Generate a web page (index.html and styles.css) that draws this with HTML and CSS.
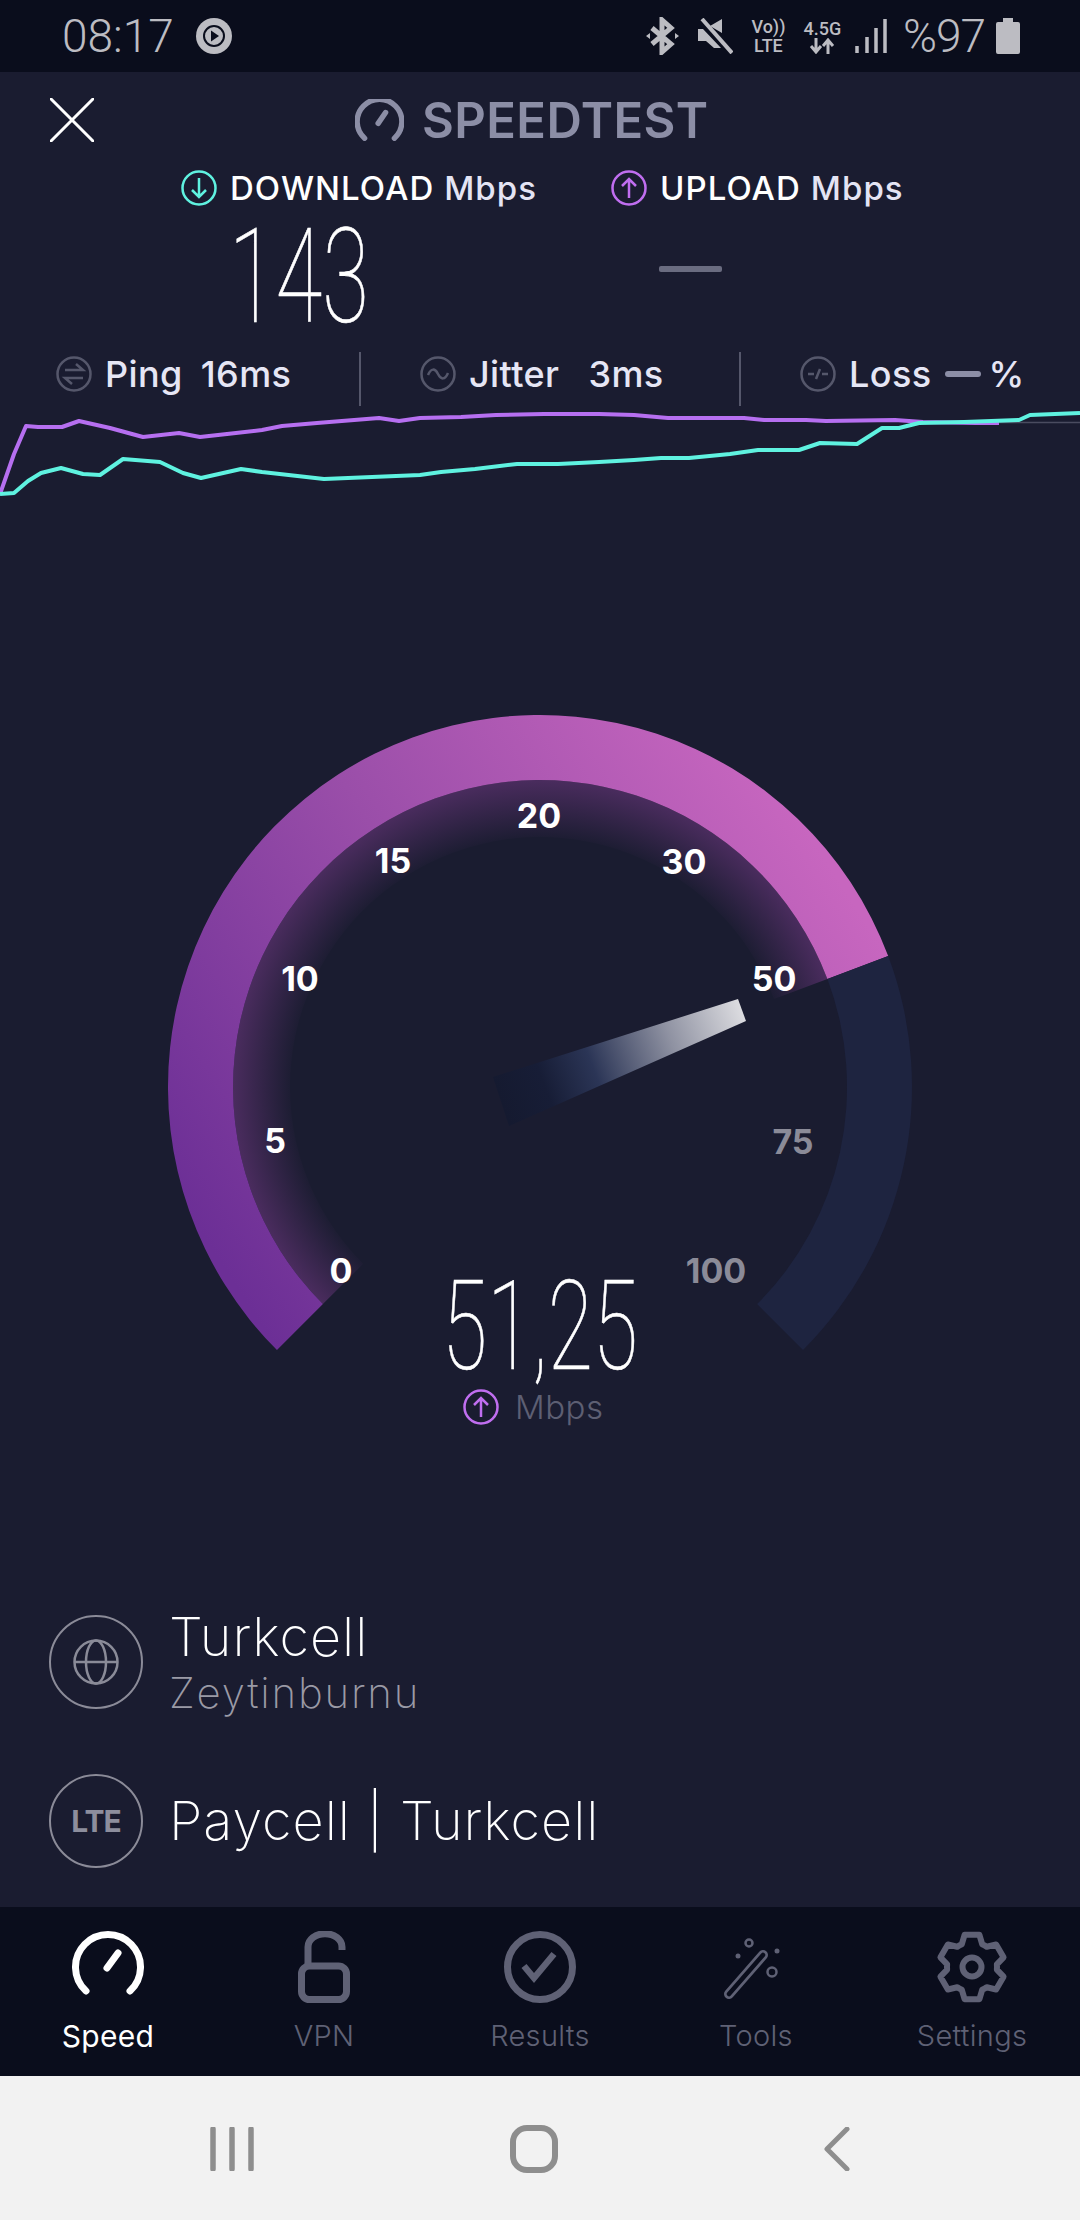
FILE: index.html
```html
<!DOCTYPE html>
<html lang="en">
<head>
  <meta charset="UTF-8">
  <meta name="viewport" content="width=device-width, initial-scale=1.0">
  <title>Speedtest</title>
  <link rel="stylesheet" href="styles.css">
</head>
<body>
  <div class="phone">
    <div class="status-bar">
      <div class="status-left">
        <span class="clock">08:17</span>
        <svg class="play-icon" width="36" height="36" viewBox="0 0 36 36"><circle cx="18" cy="18" r="18" fill="#bcbcc2"/><circle cx="18" cy="18" r="10" fill="none" stroke="#0a0d1c" stroke-width="2"/><path d="M15 12.5 23 18l-8 5.5z" fill="#0a0d1c"/></svg>
      </div>
      <div class="status-right">
        <svg width="33" height="38" viewBox="0 0 33 38"><path d="M6 11 25 27 16 35V3l9 8L6 27" fill="none" stroke="#bcbcc2" stroke-width="5"/><path d="M0 19l4-3v6zM33 19l-4-3v6z" fill="#bcbcc2"/></svg>
        <svg class="mute-icon" width="35" height="36" viewBox="0 0 35 36"><path d="M0 11h5L23 30H16l-8-7H0zM12 8l12-7v14z" fill="#bcbcc2"/><path d="M4 1 34 35" stroke="#bcbcc2" stroke-width="4"/></svg>
        <div class="net-stack volte"><span>Vo))</span><span>LTE</span></div>
        <div class="net-stack fourg"><span>4.5G</span>
          <svg width="26" height="16" viewBox="0 0 26 16"><path d="M7 0v13M2 8l5 6 5-6M19 16V3M14 8l5-6 5 6" fill="none" stroke="#bcbcc2" stroke-width="3"/></svg>
        </div>
        <svg class="signal-icon" width="32" height="34" viewBox="0 0 32 34"><path d="M2 27v7M12 18v16M21 9v25M30 0v34" stroke="#bcbcc2" stroke-width="3.5"/></svg>
        <span class="battery-pct">%97</span>
        <svg class="battery-icon" width="24" height="36" viewBox="0 0 24 36"><path d="M7 0h10v4h5a2 2 0 0 1 2 2v28a2 2 0 0 1-2 2H2a2 2 0 0 1-2-2V6a2 2 0 0 1 2-2h5z" fill="#bcbcc2"/></svg>
      </div>
    </div>

    <main class="content">
      <header class="title-row">
        <svg class="close-icon" width="44" height="44" viewBox="0 0 44 44"><path d="M1 1 43 43M43 1 1 43" stroke="#fff" stroke-width="3" stroke-linecap="round"/></svg>
        <svg class="title-gauge" width="49" height="42" viewBox="0 0 72 62"><path d="M14 58A33 33 0 1 1 58 58" fill="none" stroke="#8c8ea6" stroke-width="8" stroke-linecap="round"/><path d="M34 36 45 20" stroke="#8c8ea6" stroke-width="8" stroke-linecap="round"/></svg>
        <h1>SPEEDTEST</h1>
      </header>

      <section class="readings">
        <div class="reading">
          <div class="reading-label">
            <svg width="36" height="36" viewBox="0 0 36 36"><circle cx="18" cy="18" r="16.5" fill="none" stroke="#5ff2e0" stroke-width="2.5"/><path d="M18 8v19M11 20l7 7 7-7" fill="none" stroke="#5ff2e0" stroke-width="2.5"/></svg>
            <span>DOWNLOAD <em>Mbps</em></span>
          </div>
          <div class="reading-value big-number">143</div>
        </div>
        <div class="reading">
          <div class="reading-label">
            <svg width="36" height="36" viewBox="0 0 36 36"><circle cx="18" cy="18" r="16.5" fill="none" stroke="#c06ef0" stroke-width="2.5"/><path d="M18 28V9M11 16l7-7 7 7" fill="none" stroke="#c06ef0" stroke-width="2.5"/></svg>
            <span>UPLOAD <em>Mbps</em></span>
          </div>
          <div class="reading-empty"><i class="dash"></i></div>
        </div>
      </section>

      <section class="stats">
        <div class="stat stat-ping">
          <svg width="36" height="36" viewBox="0 0 36 36"><circle cx="18" cy="18" r="16.5" fill="none" stroke="#55576b" stroke-width="2.5"/><path d="M9 14h18l-7-6M27 22H9l7 6" fill="none" stroke="#55576b" stroke-width="2.5"/></svg>
          <span class="stat-name">Ping</span><span class="stat-val">16ms</span>
        </div>
        <i class="stat-rule"></i>
        <div class="stat stat-jitter">
          <svg width="36" height="36" viewBox="0 0 36 36"><circle cx="18" cy="18" r="16.5" fill="none" stroke="#55576b" stroke-width="2.5"/><path d="M8 19c3-7 7-7 10-1s7 6 10-1" fill="none" stroke="#55576b" stroke-width="2.5"/></svg>
          <span class="stat-name">Jitter</span><span class="stat-val">3ms</span>
        </div>
        <i class="stat-rule"></i>
        <div class="stat stat-loss">
          <svg width="36" height="36" viewBox="0 0 36 36"><circle cx="18" cy="18" r="16.5" fill="none" stroke="#55576b" stroke-width="2.5"/><path d="M8 18h6M16 23l4-10M22 18h6" fill="none" stroke="#55576b" stroke-width="2.5"/></svg>
          <span class="stat-name">Loss</span><i class="dash dash-small"></i><span class="stat-pct">%</span>
        </div>
      </section>

      <svg class="graph" width="1080" height="96" viewBox="0 405 1080 96">
        <path d="M923 421.5H1080" stroke="#4a4c60" stroke-width="1.5"/>
        <path d="M0 493 14 453 26 425 38 426H62L79 420 110 427 143 436 179 432 200 436 227 433 262 429 282 425 317 422 379 417 399 420 420 417 461 416 496 414 544 413H599L634 414 668 417 744 417 764 419H806L826 420 895 419 923 421 975 422H999" fill="none" stroke="#b66ff0" stroke-width="4" stroke-linejoin="round"/>
        <path d="M0 493 14 492 28 480 41 472 61 467 83 473 100 474 123 458 160 461 183 472 201 477 241 468 262 471 324 478 372 476 420 474 441 471 475 468 517 463 558 463 599 461 634 459 661 457 689 457 730 453 758 449 799 449 820 442 857 443 882 427 899 427 919 422 964 421 1019 419 1030 414 1080 412" fill="none" stroke="#5ff2e0" stroke-width="4" stroke-linejoin="round"/>
      </svg>

      <section class="gauge">
        <svg class="gauge-dial" width="1080" height="664" viewBox="0 700 1080 664">
          <defs>
            <linearGradient id="arcFill" gradientUnits="userSpaceOnUse" x1="277" y1="1349" x2="888" y2="955">
              <stop offset="0" stop-color="#6c2f96"/>
              <stop offset="0.5" stop-color="#9a4ea9"/>
              <stop offset="1" stop-color="#c766bf"/>
            </linearGradient>
            <radialGradient id="arcGlow" gradientUnits="userSpaceOnUse" cx="540" cy="1086" r="307">
              <stop offset="0.8" stop-color="#1a1c30"/>
              <stop offset="1" stop-color="#4a2c5e"/>
            </radialGradient>
            <linearGradient id="needleFill" gradientUnits="userSpaceOnUse" x1="501" y1="1100" x2="742" y2="1009">
              <stop offset="0" stop-color="#151a30"/>
              <stop offset="0.18" stop-color="#171d36"/>
              <stop offset="0.38" stop-color="#2b3556"/>
              <stop offset="0.7" stop-color="#8f92a2"/>
              <stop offset="1" stop-color="#dcdce0"/>
            </linearGradient>
          </defs>
          <path d="M322.92 1303.08A307 307 0 1 1 827.4 978L774 998A250 250 0 1 0 363.2 1262.8Z" fill="url(#arcGlow)"/>
          <path d="M276.96 1349.04A372 372 0 1 1 888.2 955.1L827.4 978A307 307 0 1 0 322.92 1303.08Z" fill="url(#arcFill)"/>
          <path d="M888.2 955.1A372 372 0 0 1 803.04 1349.04L757.08 1303.08A307 307 0 0 0 827.4 978Z" fill="#1e2440"/>
          <path d="M738 998 746 1020 509 1125 493 1076Z" fill="url(#needleFill)"/>
          <g class="tick">
            <text x="341" y="1282">0</text>
            <text x="275" y="1152">5</text>
            <text x="300" y="990">10</text>
            <text x="393" y="872">15</text>
            <text x="539" y="827">20</text>
            <text x="684" y="873">30</text>
            <text x="774" y="990">50</text>
          </g>
          <g class="tick tick-off">
            <text x="793" y="1153">75</text>
            <text x="716" y="1282">100</text>
          </g>
        </svg>
        <div class="gauge-readout">
          <div class="gauge-value big-number">51,25</div>
          <div class="gauge-unit">
            <svg width="36" height="36" viewBox="0 0 36 36"><circle cx="18" cy="18" r="16.5" fill="none" stroke="#c06ef0" stroke-width="2.5"/><path d="M18 28V9M11 16l7-7 7 7" fill="none" stroke="#c06ef0" stroke-width="2.5"/></svg>
            <span>Mbps</span>
          </div>
        </div>
      </section>

      <section class="servers">
        <div class="server">
          <div class="server-badge">
            <svg width="46" height="46" viewBox="0 0 46 46"><g fill="none" stroke="#8a8b98" stroke-width="2.5"><circle cx="23" cy="23" r="21.5"/><ellipse cx="23" cy="23" rx="10" ry="21.5"/><path d="M2 23H44"/></g></svg>
          </div>
          <div class="server-text">
            <div class="server-name">Turkcell</div>
            <div class="server-place">Zeytinburnu</div>
          </div>
        </div>
        <div class="server">
          <div class="server-badge"><span class="lte">LTE</span></div>
          <div class="server-text">
            <div class="server-name">Paycell | Turkcell</div>
          </div>
        </div>
      </section>
    </main>

    <nav class="tab-bar">
      <div class="tab tab-active">
        <svg width="72" height="72" viewBox="0 0 72 72"><path d="M14 60A32.5 32.5 0 1 1 58 60" fill="none" stroke="#fff" stroke-width="7" stroke-linecap="round"/><path d="M35 37 46 22" stroke="#fff" stroke-width="7" stroke-linecap="round"/></svg>
        <span>Speed</span>
      </div>
      <div class="tab">
        <svg width="72" height="72" viewBox="0 0 72 72"><rect x="13.5" y="35" width="45" height="33.5" rx="8" fill="none" stroke="#5f6175" stroke-width="7"/><path d="M20 35V16A16 12.5 0 0 1 54 16V19" fill="none" stroke="#5f6175" stroke-width="7"/></svg>
        <span>VPN</span>
      </div>
      <div class="tab">
        <svg width="72" height="72" viewBox="0 0 72 72"><circle cx="36" cy="36" r="32.5" fill="none" stroke="#5f6175" stroke-width="7"/><path d="M20 35 30 47 50 23" fill="none" stroke="#5f6175" stroke-width="6.5"/></svg>
        <span>Results</span>
      </div>
      <div class="tab">
        <svg width="72" height="72" viewBox="0 0 72 72"><path d="M9 63 43 24" stroke="#5f6175" stroke-width="10" stroke-linecap="round"/><path d="M9 63 43 24" stroke="#0a0d1c" stroke-width="4.5" stroke-linecap="round"/><g fill="none" stroke="#5f6175" stroke-width="2.5"><circle cx="29" cy="12" r="3.5"/><circle cx="52" cy="41" r="4.5"/></g><circle cx="18" cy="25" r="2.5" fill="#5f6175"/><circle cx="57" cy="20" r="2.5" fill="#5f6175"/></svg>
        <span>Tools</span>
      </div>
      <div class="tab">
        <svg width="72" height="72" viewBox="0 0 72 72"><path d="M25.83 13.16L28.58 3.85H43.42L46.17 13.16A25 25 0 0 1 50.70 15.77L60.13 13.5L67.56 26.35L60.86 33.39A25 25 0 0 1 60.86 38.61L67.56 45.65L60.13 58.5L50.70 56.23A25 25 0 0 1 46.17 58.84L43.42 68.15H28.58L25.83 58.84A25 25 0 0 1 21.30 56.23L11.87 58.5L4.44 45.65L11.14 38.61A25 25 0 0 1 11.14 33.39L4.44 26.35L11.87 13.5L21.30 15.77A25 25 0 0 1 25.83 13.16Z" fill="none" stroke="#5f6175" stroke-width="6" stroke-linejoin="round"/><circle cx="36" cy="36" r="9.5" fill="none" stroke="#5f6175" stroke-width="6"/></svg>
        <span>Settings</span>
      </div>
    </nav>

    <div class="nav-bar">
      <svg width="44" height="44" viewBox="0 0 44 44"><path d="M3 2V42M22 2V42M41 2V42" stroke="#8e8e8e" stroke-width="5.5" stroke-linecap="round"/></svg>
      <svg width="48" height="48" viewBox="0 0 48 48"><rect x="3" y="3" width="42" height="42" rx="14" fill="none" stroke="#8e8e8e" stroke-width="6"/></svg>
      <svg width="26" height="44" viewBox="0 0 26 44"><path d="M23 2 3 22 23 42" fill="none" stroke="#8e8e8e" stroke-width="5" stroke-linecap="round" stroke-linejoin="round"/></svg>
    </div>
  </div>
</body>
</html>
```

FILE: styles.css
```css
:root {
  --bg: #1a1c30;
  --bar: #0a0d1c;
  --status: #bcbcc2;
  --muted: #8b8b98;
  --tab-off: #5f6175;
}

* {
  box-sizing: border-box;
}

body {
  margin: 0;
  background-color: var(--bg);
  font-family: 'Inter', 'Liberation Sans', sans-serif;
  color: #fff;
}

svg {
  display: block;
  flex-shrink: 0;
}

.phone {
  width: 1080px;
  height: 2220px;
  display: flex;
  flex-direction: column;
  overflow: hidden;
}

/* status bar */
.status-bar {
  height: 72px;
  background-color: var(--bar);
  color: var(--status);
  font-family: 'Roboto', sans-serif;
  font-weight: 300;
  display: flex;
  align-items: center;
  justify-content: space-between;
  padding: 0 60px 0 62px;
}

.status-left {
  display: flex;
  align-items: center;
  gap: 22px;
}

.clock {
  font-size: 46px;
  line-height: 72px;
}

.status-right {
  display: flex;
  align-items: center;
}

.mute-icon {
  margin-left: 19px;
}

.net-stack {
  display: flex;
  flex-direction: column;
  align-items: center;
  font-family: 'Roboto', sans-serif;
  font-weight: 500;
  line-height: 19px;
}

.volte {
  margin-left: 17px;
  width: 37px;
  font-size: 18px;
}

.fourg {
  margin-left: 16px;
  width: 39px;
  font-size: 18px;
}

.signal-icon {
  margin-left: 13px;
}

.battery-pct {
  margin-left: 16px;
  font-size: 46px;
  letter-spacing: -1px;
}

.battery-icon {
  margin-left: 11px;
}

/* main area */
.content {
  flex: 1;
  background-color: var(--bg);
}

.title-row {
  display: flex;
  align-items: center;
  height: 68px;
  margin-top: 14px;
  padding-left: 50px;
}

.title-gauge {
  margin-left: 261px;
}

.title-row h1 {
  margin: 0 0 0 18px;
  font-size: 49px;
  font-weight: 600;
  color: #8c8ea6;
  letter-spacing: 0.4px;
}

.readings {
  display: flex;
  padding-left: 181px;
  margin-top: 13px;
}

.reading {
  width: 430px;
}

.reading-label {
  display: flex;
  align-items: center;
  gap: 13px;
  height: 42px;
  font-size: 33px;
  font-weight: 500;
  letter-spacing: 1.05px;
  white-space: nowrap;
  color: #fff;
}

.reading-label em {
  font-style: normal;
  color: #e4e4f4;
}

.big-number {
  font-family: 'Roboto', sans-serif;
  font-weight: 100;
  -webkit-text-stroke: 0.6px #fff;
  transform: scaleX(0.65);
  transform-origin: left center;
}

.reading-value {
  margin-left: 48px;
  margin-top: 9px;
  font-size: 131px;
  line-height: 118px;
}

.reading-empty {
  padding: 57px 0 0 48px;
}

.dash {
  display: block;
  width: 63px;
  height: 6px;
  border-radius: 2px;
  background-color: #6a6c80;
}

.stats {
  display: flex;
  align-items: center;
  height: 54px;
  margin-top: 16px;
}

.stat {
  display: flex;
  align-items: center;
  padding-bottom: 10px;
  font-size: 36px;
  font-weight: 500;
  letter-spacing: 0.4px;
  color: #e6e6f5;
}

.stat-ping {
  width: 359px;
  padding-left: 56px;
}

.stat-jitter {
  width: 378px;
  padding-left: 59px;
}

.stat-loss {
  padding-left: 59px;
}

.stat-name {
  margin-left: 13px;
}

.stat-val {
  margin-left: 18px;
}

.stat-jitter .stat-val {
  margin-left: 29px;
}

.stat-rule {
  width: 2px;
  height: 54px;
  background-color: #55576b;
}

.dash-small {
  width: 36px;
  margin-left: 14px;
  border-radius: 3px;
  background-color: #8c8ea6;
}

.stat-pct {
  margin-left: 7px;
}

/* gauge */
.gauge {
  position: relative;
  margin-top: 199px;
  height: 913px;
}

.tick text {
  font-family: 'Inter', sans-serif;
  font-size: 34px;
  font-weight: 700;
  fill: #fff;
  text-anchor: middle;
}

.tick-off text {
  fill: #8b8b98;
}

.gauge-readout {
  position: absolute;
  left: 442px;
  top: 570px;
}

.gauge-value {
  font-size: 124px;
  line-height: 112px;
  white-space: nowrap;
  transform: scaleX(0.665);
}

.gauge-unit {
  display: flex;
  align-items: center;
  gap: 16px;
  margin: 4px 0 0 21px;
  font-size: 33px;
  font-weight: 300;
  letter-spacing: 0.5px;
  color: #5d5f73;
}

/* server rows */
.servers {
  display: flex;
  flex-direction: column;
  gap: 64px;
  padding-left: 49px;
}

.server {
  display: flex;
  align-items: center;
  gap: 26px;
  height: 95px;
}

.server-badge {
  width: 94px;
  height: 94px;
  border: 2px solid var(--muted);
  border-radius: 50%;
  display: flex;
  align-items: center;
  justify-content: center;
}

.lte {
  font-size: 30px;
  font-weight: 700;
  color: #8d8e9d;
  letter-spacing: -1px;
}

.server-name {
  font-size: 54px;
  font-weight: 200;
  letter-spacing: 1px;
  line-height: 60px;
}

.server-place {
  margin-top: 3px;
  font-size: 42px;
  font-weight: 200;
  letter-spacing: 1.8px;
  line-height: 46px;
  color: #9a9aa6;
}

/* bottom tabs */
.tab-bar {
  height: 169px;
  background-color: var(--bar);
  display: flex;
  padding-top: 24px;
}

.tab {
  width: 216px;
  display: flex;
  flex-direction: column;
  align-items: center;
  gap: 15px;
  font-size: 29px;
  font-weight: 300;
  letter-spacing: 0.3px;
  color: var(--tab-off);
}

.tab-active {
  color: #fff;
  font-weight: 400;
  font-size: 30px;
}

/* system nav */
.nav-bar {
  height: 144px;
  background-color: #f2f2f2;
  display: flex;
  align-items: center;
  padding: 2px 0 0 210px;
}

.nav-bar svg:nth-child(2) {
  margin-left: 256px;
}

.nav-bar svg:nth-child(3) {
  margin-left: 266px;
}
```
